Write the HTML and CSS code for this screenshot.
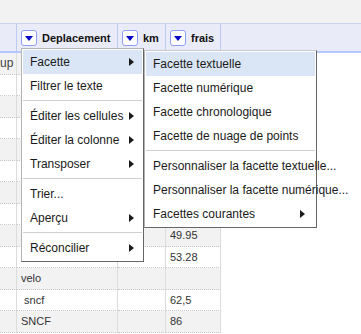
FILE: index.html
```html
<!DOCTYPE html>
<html lang="fr">
  <head>
    <meta charset="UTF-8" />
    <title>Facette</title>
    <link rel="stylesheet" href="styles.css">
  </head>
  <body>
    <div class="topbar"></div>

    <div class="header">
      <div class="hcell c1"></div>
      <div class="hcell c2"><span class="dd"></span>Deplacement</div>
      <div class="hcell c3"><span class="dd"></span>km</div>
      <div class="hcell c4"><span class="dd"></span>frais</div>
      <div class="hcell rest"></div>
    </div>

    <div class="rows">
      <div class="row"><div class="cell c1">up</div><div class="cell c2"></div><div class="cell c3"></div><div class="cell c4"></div></div>
      <div class="row"><div class="cell c1"></div><div class="cell c2"></div><div class="cell c3"></div><div class="cell c4"></div></div>
      <div class="row"><div class="cell c1"></div><div class="cell c2"></div><div class="cell c3"></div><div class="cell c4"></div></div>
      <div class="row"><div class="cell c1"></div><div class="cell c2"></div><div class="cell c3"></div><div class="cell c4"></div></div>
      <div class="row"><div class="cell c1"></div><div class="cell c2"></div><div class="cell c3"></div><div class="cell c4"></div></div>
      <div class="row"><div class="cell c1"></div><div class="cell c2"></div><div class="cell c3"></div><div class="cell c4"></div></div>
      <div class="row"><div class="cell c1"></div><div class="cell c2"></div><div class="cell c3"></div><div class="cell c4"></div></div>
      <div class="row"><div class="cell c1"></div><div class="cell c2"></div><div class="cell c3"></div><div class="cell c4"></div></div>
      <div class="row"><div class="cell c1"></div><div class="cell c2"></div><div class="cell c3"></div><div class="cell c4">49.95</div></div>
      <div class="row"><div class="cell c1"></div><div class="cell c2"></div><div class="cell c3"></div><div class="cell c4">53.28</div></div>
      <div class="row"><div class="cell c1"></div><div class="cell c2">velo</div><div class="cell c3"></div><div class="cell c4"></div></div>
      <div class="row"><div class="cell c1"></div><div class="cell c2"> sncf</div><div class="cell c3"></div><div class="cell c4">62,5</div></div>
      <div class="row"><div class="cell c1"></div><div class="cell c2">SNCF</div><div class="cell c3"></div><div class="cell c4">86</div></div>
    </div>

    <div class="menu main-menu">
      <div class="item active">Facette<span class="arrow"></span></div>
      <div class="item">Filtrer le texte</div>
      <div class="sep"></div>
      <div class="item">Éditer les cellules<span class="arrow"></span></div>
      <div class="item">Éditer la colonne<span class="arrow"></span></div>
      <div class="item">Transposer<span class="arrow"></span></div>
      <div class="sep"></div>
      <div class="item">Trier...</div>
      <div class="item">Aperçu<span class="arrow"></span></div>
      <div class="sep"></div>
      <div class="item">Réconcilier<span class="arrow"></span></div>
    </div>

    <div class="menu sub-menu">
      <div class="item active">Facette textuelle</div>
      <div class="item">Facette numérique</div>
      <div class="item">Facette chronologique</div>
      <div class="item">Facette de nuage de points</div>
      <div class="sep"></div>
      <div class="item">Personnaliser la facette textuelle...</div>
      <div class="item">Personnaliser la facette numérique...</div>
      <div class="item">Facettes courantes<span class="arrow"></span></div>
    </div>
  </body>
</html>
```

FILE: styles.css
```css
body {
  margin: 0;
  font-family: "Liberation Sans", Arial, sans-serif;
  background: white;
  color: #222;
  overflow: hidden;
}
.topbar {
  height: 23px;
  background-color: #f2f2f2;
}
.header {
  display: flex;
  height: 30px;
  box-sizing: border-box;
  background-color: #e9ebf8;
  border-top: 1px solid #c9d4f4;
  border-bottom: 2px solid #b4c8fa;
}
.hcell {
  display: flex;
  align-items: center;
  box-sizing: border-box;
  padding-left: 4px;
  border-right: 1px solid #bccbf2;
  font-size: 11px;
  font-weight: bold;
  color: #111;
}
.c1 {
  width: 17px;
}
.c2 {
  width: 101px;
}
.c3 {
  width: 48px;
}
.c4 {
  width: 55px;
}
.hcell.rest {
  flex: 1;
  border-right: none;
}
.dd {
  display: flex;
  justify-content: center;
  align-items: center;
  width: 16px;
  height: 16px;
  box-sizing: border-box;
  margin-right: 5px;
  border: 1px solid #8f9ff0;
  border-radius: 3px;
  background: white;
}
.dd::after {
  content: "";
  margin-top: 1px;
  border-top: 5px solid #0000c8;
  border-left: 4.5px solid transparent;
  border-right: 4.5px solid transparent;
}
.row {
  display: flex;
  height: 21.5px;
  width: 221px;
}
.row:nth-child(odd) {
  background-color: #f2f2f2;
}
.cell {
  display: flex;
  align-items: center;
  box-sizing: border-box;
  padding-left: 4px;
  border-right: 1px solid #dcdcdc;
  border-bottom: 1px dotted #c8c8c8;
  font-size: 11px;
  color: #333;
  white-space: pre;
  overflow: hidden;
}
.cell.c1 {
  padding-left: 0;
  font-size: 12px;
  color: #444;
}
.menu {
  position: absolute;
  box-sizing: border-box;
  padding: 1px;
  background: white;
  border: 1px solid #b4b4b4;
  border-right-color: #666;
  border-bottom-color: #666;
  font-size: 12px;
  color: #1a1a1a;
}
.main-menu {
  left: 21px;
  top: 48px;
  width: 123px;
}
.sub-menu {
  left: 144px;
  top: 50px;
  width: 173px;
  border-top-color: #c8c8c8;
}
.item {
  display: flex;
  align-items: center;
  height: 24px;
  padding-left: 7px;
  white-space: nowrap;
}
.item.active {
  background-color: #dae6f6;
}
.arrow {
  margin-left: auto;
  margin-right: 8px;
  border-left: 5px solid #1a1a1a;
  border-top: 4.5px solid transparent;
  border-bottom: 4.5px solid transparent;
}
.sub-menu .arrow {
  margin-right: 10px;
}
.sep {
  height: 1px;
  margin: 2px 0 3px;
  background-color: #d0d0d0;
}
```
